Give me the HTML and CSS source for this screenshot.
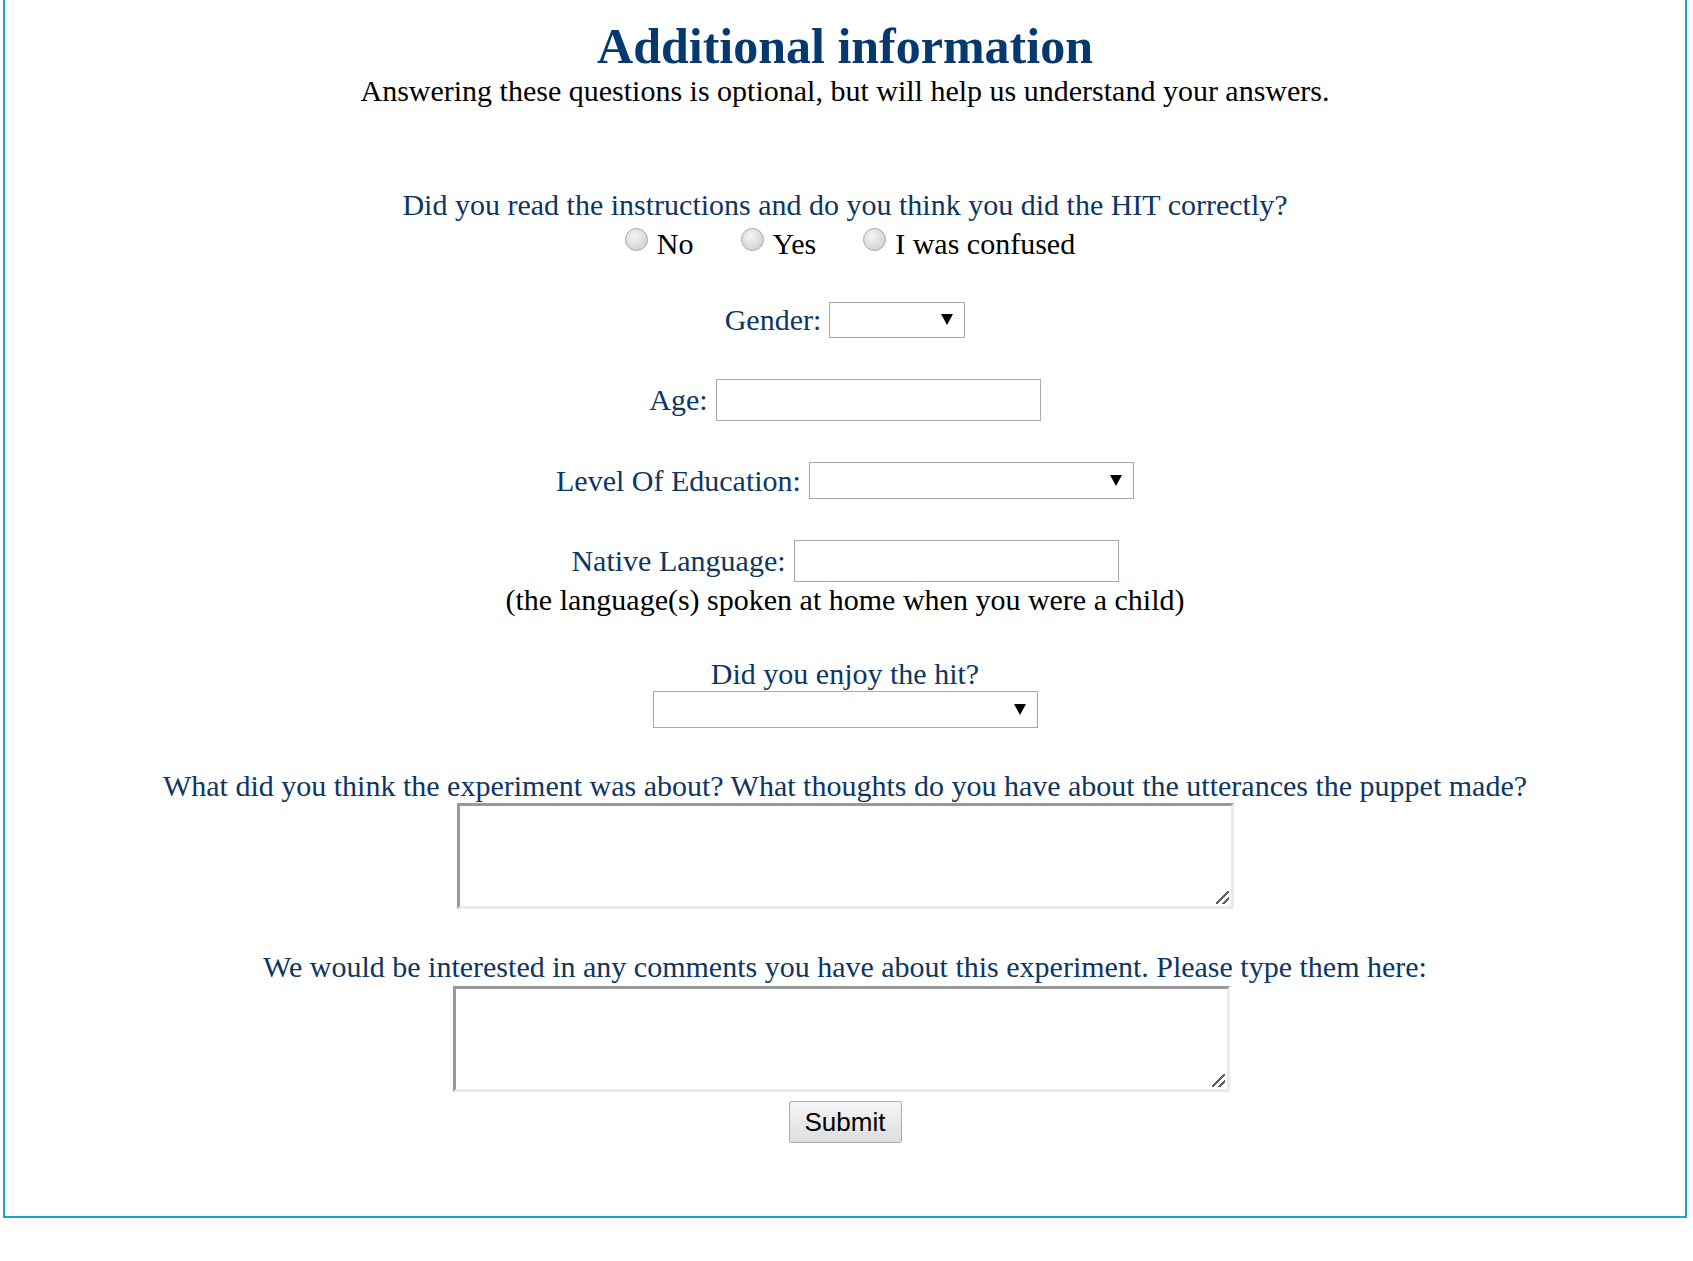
FILE: index.html
```html
<!DOCTYPE html>
<html lang="en">
<head>
<meta charset="utf-8">
<title>Additional information</title>
<link rel="stylesheet" href="styles.css">
</head>
<body>
<div class="page">
  <form class="survey">
    <h1 class="title">Additional information</h1>
    <p class="subtitle">Answering these questions is optional, but will help us understand your answers.</p>

    <div class="q q-hit">Did you read the instructions and do you think you did the HIT correctly?</div>
    <div class="radios">
      <label class="opt"><input type="radio" name="hit" class="radio"><span>No</span></label>
      <label class="opt"><input type="radio" name="hit" class="radio"><span>Yes</span></label>
      <label class="opt"><input type="radio" name="hit" class="radio"><span>I was confused</span></label>
    </div>

    <div class="row row-gender">
      <label class="lbl">Gender:</label>
      <span class="sel"><select class="select select-gender"><option></option><option>Male</option><option>Female</option><option>Other</option></select></span>
    </div>

    <div class="row row-age">
      <label class="lbl">Age:</label>
      <input type="text" class="field">
    </div>

    <div class="row row-edu">
      <label class="lbl">Level Of Education:</label>
      <span class="sel"><select class="select select-edu"><option></option></select></span>
    </div>

    <div class="row row-native">
      <label class="lbl">Native Language:</label>
      <input type="text" class="field">
    </div>
    <div class="note">(the language(s) spoken at home when you were a child)</div>

    <div class="q q-enjoy">Did you enjoy the hit?</div>
    <span class="sel"><select class="select select-enjoy"><option></option></select></span>

    <div class="q q-about">What did you think the experiment was about? What thoughts do you have about the utterances the puppet made?</div>
    <div class="area-wrap"><textarea class="area"></textarea></div>

    <div class="q q-comments">We would be interested in any comments you have about this experiment. Please type them here:</div>
    <div class="area-wrap area-wrap-comments"><textarea class="area"></textarea></div>

    <button type="button" class="submit">Submit</button>
  </form>
</div>
</body>
</html>
```
FILE: styles.css
```css
html, body {
  margin: 0;
  padding: 0;
  background: #ffffff;
}

body {
  font-family: "Liberation Serif", "Times New Roman", serif;
  font-size: 30px;
  color: #000;
}

.page {
  margin-left: 3px;
  width: 1684px;
  box-sizing: border-box;
  border-left: 2px solid #1ca5cb;
  border-right: 2px solid #1ca5cb;
  border-bottom: 2px solid #1ca5cb;
  padding-bottom: 73px;
}

.survey {
  display: flex;
  flex-direction: column;
  align-items: center;
}

.title {
  margin: 18px 0 0 0;
  font-size: 50px;
  line-height: 56px;
  font-weight: bold;
  color: #063a6e;
}

.subtitle {
  margin: 0;
  line-height: 34px;
  color: #000;
}

.q {
  line-height: 34px;
  color: #0e3663;
}

.q-hit { margin-top: 80px; }

.radios {
  margin-top: 5px;
  margin-left: 10px;
  height: 34px;
  display: flex;
  align-items: center;
  gap: 47px;
  line-height: 34px;
}

.opt {
  display: flex;
  align-items: center;
}

.radio {
  -webkit-appearance: none;
  appearance: none;
  width: 23px;
  height: 23px;
  margin: 0 9px 10px 0;
  border-radius: 50%;
  border: 1px solid #a8a8a8;
  background: radial-gradient(circle at 40% 35%, #f4f4f4 0%, #dcdcdc 55%, #c6c6c6 100%);
  box-sizing: border-box;
}

.row {
  display: flex;
  align-items: center;
  gap: 8px;
  line-height: 34px;
  color: #0e3663;
  margin-top: 41px;
}

.lbl { color: #0e3663; }

.sel {
  position: relative;
  display: block;
}

.sel::after {
  content: "";
  position: absolute;
  right: 12px;
  top: 50%;
  margin-top: -6px;
  width: 0;
  height: 0;
  border-left: 6px solid transparent;
  border-right: 6px solid transparent;
  border-top: 11px solid #000;
  pointer-events: none;
}

.select {
  -webkit-appearance: none;
  appearance: none;
  display: block;
  box-sizing: border-box;
  border: 1px solid #a9a9a9;
  border-radius: 0;
  background: #fff;
  margin: 0;
  font-family: "Liberation Sans", Arial, sans-serif;
  font-size: 20px;
}

.select-gender { width: 136px; height: 36px; }
.select-edu { width: 325px; height: 37px; }
.select-enjoy { width: 385px; height: 37px; }

.field {
  box-sizing: border-box;
  width: 325px;
  height: 42px;
  margin: 0;
  border: 1px solid #a9a9a9;
  border-radius: 0;
  background: #fff;
  font-size: 20px;
}

.note {
  margin-top: 1px;
  line-height: 34px;
  color: #000;
}

.q-enjoy { margin-top: 40px; }
.q-about { margin-top: 41px; }
.q-comments { margin-top: 41px; }

.area-wrap {
  position: relative;
  width: 777px;
  height: 106px;
}

.area-wrap::after {
  content: "";
  position: absolute;
  right: 5px;
  bottom: 5px;
  width: 13px;
  height: 13px;
  background: linear-gradient(135deg,
    transparent 43%, #5e5e5e 43%, #5e5e5e 55%, transparent 55%,
    transparent 72%, #5e5e5e 72%, #5e5e5e 84%, transparent 84%);
  pointer-events: none;
}

.area-wrap-comments {
  margin-top: 2px;
  margin-right: 8px;
}

.area {
  display: block;
  box-sizing: border-box;
  width: 777px;
  height: 106px;
  margin: 0;
  border-style: solid;
  border-width: 3px;
  border-color: #999999 #ebebeb #ebebeb #999999;
  background: #fff;
  resize: none;
}

.submit {
  margin-top: 9px;
  box-sizing: border-box;
  width: 113px;
  height: 42px;
  padding: 0;
  font-family: "Liberation Sans", Arial, sans-serif;
  font-size: 26px;
  color: #000;
  border: 1px solid #acacac;
  border-radius: 2px;
  background: linear-gradient(#f5f5f5, #dedede);
}
```
